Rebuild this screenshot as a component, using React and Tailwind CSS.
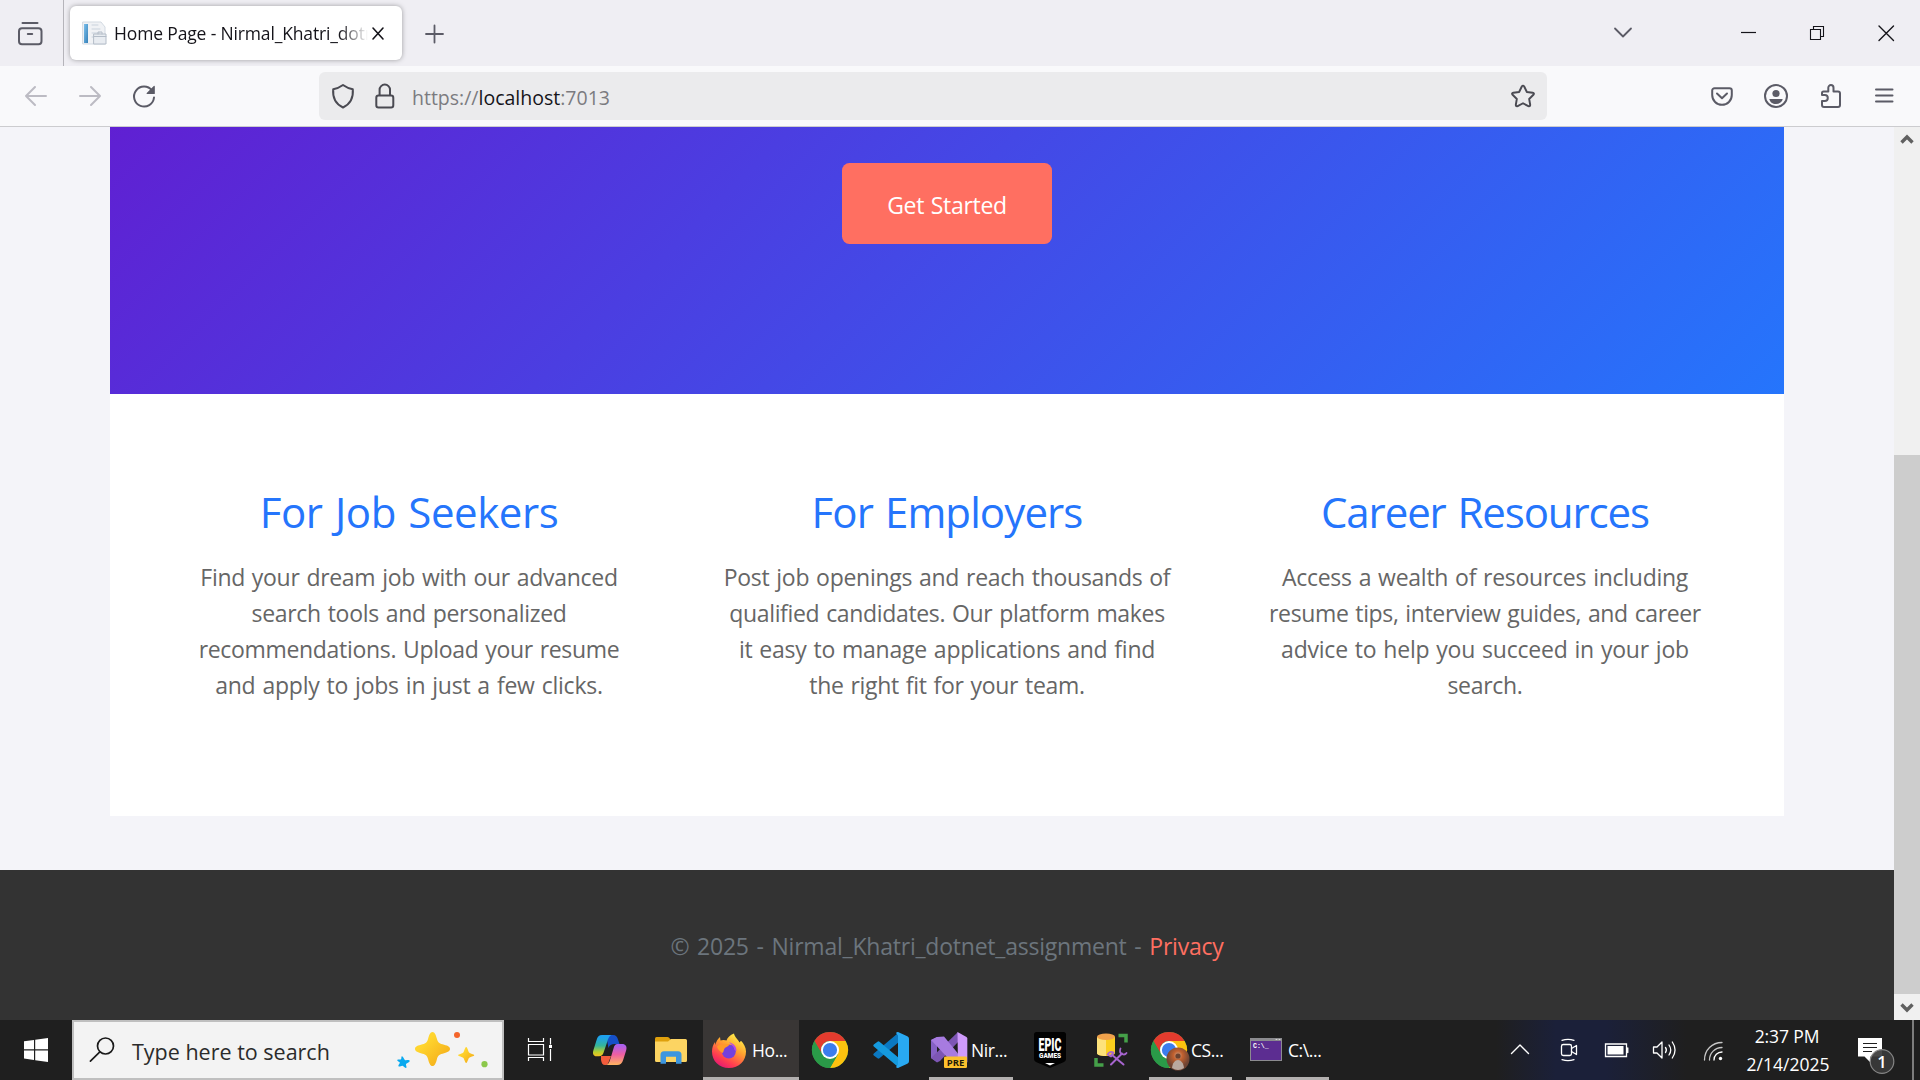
import React from "react";

// Draws an icon in a slot; x/y/w/h describe the drawing's coordinate window.
function Icon({ x, y, w, h, children, stroke = "none", sw = 2, fill = "none" }) {
  return (
    <svg
      className="block shrink-0"
      width={w}
      height={h}
      viewBox={`${x} ${y} ${w} ${h}`}
      fill={fill}
      stroke={stroke}
      strokeWidth={sw}
      strokeLinecap="round"
      strokeLinejoin="round"
    >
      {children}
    </svg>
  );
}

function TabStrip() {
  return (
    <div className="flex h-[66px] shrink-0 bg-[#efeef3]">
      <div className="w-16 border-r border-[#b5b4ba]">
        <Icon x={0} y={0} w={63} h={66} stroke="#5b5b66">
          <path d="M22.500 23h15" />
          <rect x="19" y="28.2" width="22.5" height="16" rx="3" />
          <path d="M27.8 34h4.400" />
        </Icon>
      </div>
      <div className="mt-1.5 ml-1.5 flex h-[54px] w-[332px] items-center rounded-[6px] bg-white shadow-[0_0_5px_rgba(0,0,0,0.35)]">
        <Icon x={70} y={6} w={44} h={54}>
          <defs>
            <linearGradient id="fav" x1="0" x2="1" y1="0" y2="1">
              <stop offset="0" stopColor="#7cc0ec" />
              <stop offset="1" stopColor="#3580b8" />
            </linearGradient>
          </defs>
          <path d="M83 22h18l4 5v17H83z" fill="#f0f2f5" stroke="#d3dae2" strokeWidth="1" />
          <path d="M84 24h4v19h-4z" fill="url(#fav)" />
          <path d="M92 25h6M92 29h8M92 33h8M92 37h3" stroke="#c9d2dc" strokeWidth="1" />
          <path d="M94 34h12v10H94z" fill="#e8ecf1" stroke="#b4bdc8" strokeWidth="1" />
          <path d="M94 36.5h12M98 34v-2h4v2" stroke="#b4bdc8" strokeWidth="1" />
        </Icon>
        <div className="w-[254px] overflow-hidden text-[17.5px] leading-6 tracking-[-0.15px] whitespace-nowrap text-[#15141a] [mask-image:linear-gradient(to_right,black_225px,transparent_254px)]">
          Home Page - Nirmal_Khatri_dotnet_assignment
        </div>
        <Icon x={368} y={6} w={34} h={54} stroke="#15141a" sw={1.6}>
          <path d="M373 28l10 11M383 28l-10 11" />
        </Icon>
      </div>
      <Icon x={402} y={0} w={60} h={66} stroke="#5b5b66" sw={1.8}>
        <path d="M426 34h17M434.500 25.500v17" />
      </Icon>
      <div className="ml-auto flex">
        <Icon x={1590} y={0} w={66} h={66} stroke="#5b5b66" sw={1.8}>
          <path d="M1615 28.500l8 8 8-8" />
        </Icon>
        <div className="w-[58px]" />
        <Icon x={1714} y={0} w={69} h={66} stroke="#15141a" sw={1.2}>
          <path d="M1741 32.500h15" strokeLinecap="butt" />
        </Icon>
        <Icon x={1783} y={0} w={69} h={66} stroke="#15141a" sw={1.1}>
          <path d="M1810.500 29.500h10v10h-10zM1813.500 29v-2.500h10v10h-2.500" strokeLinejoin="miter" />
        </Icon>
        <Icon x={1852} y={0} w={68} h={66} stroke="#15141a" sw={1.4}>
          <path d="M1879 26l14.500 14.500M1893.500 26l-14.500 14.500" />
        </Icon>
      </div>
    </div>
  );
}

function NavBar() {
  return (
    <div className="flex h-[61px] shrink-0 border-b border-[#cccccf] bg-[#f9f9fb] pl-[9px]">
      <Icon x={9} y={66} w={54} h={60} stroke="#bcbbc3">
        <path d="M26 96h20M35 87l-9 9 9 9" />
      </Icon>
      <Icon x={63} y={66} w={54} h={60} stroke="#bcbbc3">
        <path d="M80 96h20M91 87l9 9-9 9" />
      </Icon>
      <Icon x={117} y={66} w={54} h={60} stroke="#5b5b66">
        <path d="M152 90.500A10 10 0 1 0 154 97.500" />
        <path d="M154.200 86.500v7h-7z" fill="#5b5b66" strokeWidth="1.200" />
      </Icon>
      <div className="mt-1.5 ml-[148px] flex h-12 w-[1228px] items-center rounded-[6px] bg-[#ebebed]">
        <Icon x={319} y={72} w={48} h={48} stroke="#4a4a52">
          <path d="M343 85c3.500 2.500 6.200 3.700 9.800 4.300C353.600 98 350 104 343 107.500 336 104 332.400 98 333.200 89.300 336.800 88.700 339.500 87.500 343 85z" />
        </Icon>
        <Icon x={367} y={72} w={45} h={48} stroke="#4a4a52">
          <rect x="376.300" y="95.500" width="17" height="12" rx="2.200" />
          <path d="M379.600 95v-5.200a5.200 5.200 0 0 1 10.400 0V95" />
        </Icon>
        <div className="relative top-0.5 text-[19.5px] leading-6 whitespace-nowrap text-[#7b7b80]">
          https://<span className="text-[#15141a]">localhost</span>:7013
        </div>
        <div className="ml-auto">
          <Icon x={1499} y={72} w={48} h={48} stroke="#4a4a52">
            <path
              transform="translate(1523 96) scale(0.92) translate(-1523 -96.500)"
              strokeWidth="2.100"
              d="M1521.700 86.200q1.300-2 2.600 0l2.900 5.900 6.300.9q2.300.5.800 2.200l-4.600 4.500 1.100 6.300q.1 2.200-2 1.500l-5.800-3.100-5.800 3.100q-2.100.7-2-1.500l1.100-6.300-4.600-4.500q-1.500-1.700.8-2.200l6.300-.9z"
            />
          </Icon>
        </div>
      </div>
      <div className="ml-auto flex">
        <Icon x={1695} y={66} w={54} h={60} stroke="#5b5b66">
          <path d="M1714.500 88.200h15a2.300 2.300 0 0 1 2.300 2.300V95a9.800 9.800 0 0 1-19.600 0v-4.500a2.300 2.300 0 0 1 2.300-2.300zM1717 93.500l5 4.700 5-4.700" />
        </Icon>
        <Icon x={1749} y={66} w={54} h={60} stroke="#5b5b66">
          <circle cx="1776" cy="96" r="11" />
          <circle cx="1776" cy="93.500" r="3.600" fill="#5b5b66" stroke="none" />
          <path d="M1769.300 99h13.400c-.6 3-3.200 5-6.700 5s-6.100-2-6.700-5z" fill="#5b5b66" stroke="none" />
        </Icon>
        <Icon x={1803} y={66} w={54} h={60} stroke="#5b5b66">
          <path d="M1823.500 91.500h4.800v-3.800a2.600 2.600 0 0 1 5.200 0v3.800h4.500a2 2 0 0 1 2 2v11.500a2 2 0 0 1-2 2h-14a2 2 0 0 1-2-2v-4h2.800a3 3 0 0 0 0-6H1822v-2a1.500 1.500 0 0 1 1.500-1.500z" />
        </Icon>
        <Icon x={1857} y={66} w={63} h={60} stroke="#5b5b66">
          <path d="M1876 89.500h16.500M1876 95.500h16.500M1876 101.500h16.500" />
        </Icon>
      </div>
    </div>
  );
}

const features = [
  {
    title: "For Job Seekers",
    titleClass: "tracking-[-0.45px]",
    lines: [
      ["Find your dream job with our advanced", "tracking-[-0.3px]"],
      ["search tools and personalized", "tracking-[-0.3px]"],
      ["recommendations. Upload your resume", "tracking-[-0.32px]"],
      ["and apply to jobs in just a few clicks.", "tracking-[-0.22px]"],
    ],
  },
  {
    title: "For Employers",
    titleClass: "tracking-[-0.9px]",
    lines: [
      ["Post job openings and reach thousands of", "tracking-[-0.28px]"],
      ["qualified candidates. Our platform makes", "tracking-[-0.34px]"],
      ["it easy to manage applications and find", "tracking-[-0.24px]"],
      ["the right fit for your team.", "tracking-[-0.3px]"],
    ],
  },
  {
    title: "Career Resources",
    titleClass: "tracking-[-1.1px]",
    lines: [
      ["Access a wealth of resources including", "tracking-[-0.26px]"],
      ["resume tips, interview guides, and career", "tracking-[-0.36px]"],
      ["advice to help you succeed in your job", "tracking-[-0.22px]"],
      ["search.", "tracking-[-0.3px]"],
    ],
  },
];

function Page() {
  return (
    <div className="flex h-[893px] shrink-0 bg-[#f4f4f9]">
      <div className="flex w-[1894px] flex-col">
        <main className="mx-auto w-[1674px]">
          <section className="flex h-[267px] items-start justify-center bg-[linear-gradient(135deg,#6a11cb,#2575fc)] bg-[length:100%_610px] bg-bottom pt-9">
            <button className="h-[81px] w-[210px] rounded-[7.5px] bg-[#ff6f61] pt-[3px] text-[23px] leading-9 tracking-[-0.3px] text-white [word-spacing:1px]">
              Get Started
            </button>
          </section>
          <section className="flex h-[422px] justify-center bg-white pt-[92px]">
            {features.map((f) => (
              <article key={f.title} className="w-[538px] text-center">
                <h2 className={`text-[42px] leading-[52px] text-[#2575fc] [word-spacing:2px] ${f.titleClass}`}>
                  {f.title}
                </h2>
                <p className="mt-[21px] text-[23px] leading-9 text-[#666666] [word-spacing:1.2px]">
                  {f.lines.map(([line, spacing]) => (
                    <span key={line} className={`block whitespace-nowrap ${spacing}`}>
                      {line}
                    </span>
                  ))}
                </p>
              </article>
            ))}
          </section>
        </main>
        <footer className="mt-auto h-[150px] bg-[#333333] pt-[58px] text-center text-[23px] leading-9 tracking-[-0.22px] text-[#6c757d] [word-spacing:2px]">
          © 2025 - Nirmal_Khatri_dotnet_assignment - <a className="text-[#ff6f61]">Privacy</a>
        </footer>
      </div>
      <div className="flex w-[26px] flex-col bg-[#f0f0f0]">
        <Icon x={1894} y={127} w={26} h={26} stroke="#606060" sw={3.4}>
          <path d="M1901.500 142.500l5.500-5.500 5.500 5.500" strokeLinecap="butt" strokeLinejoin="miter" />
        </Icon>
        <div className="mt-auto h-[539px] bg-[#cdcdcd]" />
        <Icon x={1894} y={994} w={26} h={26} stroke="#606060" sw={3.4}>
          <path d="M1901.500 1004.500l5.500 5.500 5.500-5.500" strokeLinecap="butt" strokeLinejoin="miter" />
        </Icon>
      </div>
    </div>
  );
}

function Label({ children }) {
  return (
    <span className="relative top-[1.5px] text-[17.5px] leading-6 tracking-[-0.4px] whitespace-nowrap text-white">
      {children}
    </span>
  );
}

function ChromeMark({ cx, cy, r }) {
  // Three swirl sectors around a white-ringed blue centre.
  return (
    <g transform={`translate(${cx} ${cy}) scale(${r / 18})`}>
      <circle r="18" fill="#34a047" />
      <path d="M0-9H15.600A18 18 0 0 1 0 18L7.800 4.500z" fill="#fdc20f" />
      <path d="M-15.600-9A18 18 0 0 1 15.600-9H0A9 9 0 0 0-7.800 4.500z" fill="#e33b2e" />
      <path d="M-15.600-9L-7.800 4.500A9 9 0 0 0 7.800 4.500L0 18A18 18 0 0 1-15.600-9z" fill="#2a9a48" />
      <circle r="9" fill="#fff" />
      <circle r="7.100" fill="#3b7ded" />
    </g>
  );
}

function Taskbar() {
  return (
    <div className="flex h-[60px] shrink-0 bg-[#1f1f1f]">
      <Icon x={0} y={1020} w={72} h={60}>
        <path
          fill="#fff"
          d="M24 1041.300l10-1.300v9.300H24zM35.200 1039.800L48 1038v11.300H35.200zM24 1050.600h10v9.400l-10-1.400zM35.200 1050.600H48v11.400l-12.800-1.800z"
        />
      </Icon>
      <div className="flex h-[60px] w-[432px] items-center border-2 border-[#bfbfbf] bg-[#f3f3f3]">
        <Icon x={74} y={1022} w={58} h={56} stroke="#1a1a1a" sw={1.7}>
          <circle cx="105.500" cy="1046" r="8" />
          <path d="M99.600 1052.200l-9.200 9" />
        </Icon>
        <div className="relative top-0.5 text-[21.5px] leading-6 whitespace-nowrap text-[#2b2b2b]">
          Type here to search
        </div>
        <div className="ml-auto">
          <Icon x={390} y={1022} w={112} h={56}>
            <defs>
              <linearGradient id="star" x1="0" x2="1" y1="0" y2="1">
                <stop offset="0.3" stopColor="#ffd52e" />
                <stop offset="1" stopColor="#f2a516" />
              </linearGradient>
            </defs>
            <path
              fill="url(#star)"
              d="M432.500 1032c2.300 0 3.400 3 4.400 6.800 1 3.500 2 4.600 5.600 5.500 4.500 1.200 7.500 2.200 7.500 4.700s-3 3.500-7.500 4.700c-3.600.9-4.600 2-5.600 5.500-1 3.800-2.100 6.800-4.400 6.800s-3.400-3-4.400-6.800c-1-3.500-2-4.600-5.600-5.500-4.500-1.200-7.500-2.200-7.500-4.700s3-3.500 7.500-4.700c3.600-.9 4.600-2 5.600-5.500 1-3.800 2.100-6.800 4.400-6.800z"
            />
            <path
              fill="url(#star)"
              d="M466.200 1047c1 0 1.800 3.600 2.700 5.300s5.300 1.700 5.300 2.900-4.400 1.400-5.300 2.900-1.700 5-2.700 5-1.800-3.500-2.700-5-5.300-1.700-5.300-2.900 4.400-1.200 5.300-2.900 1.700-5.300 2.700-5.300z"
            />
            <path
              fill="#0aa9ef"
              d="M402 1056.200c1.200 0 1.800 3 2.900 3.800s4.500-.8 4.800.7-3 2.200-3.600 3.400 1.300 3.300 0 3.800-2.300-1.900-3.600-2.100-3.300 1.600-4 .4 1.400-2.300 1.300-3.400-3-1.500-2.500-2.700 3-.2 3.700-.9 0-3 1-3z"
            />
            <circle cx="457" cy="1035" r="3" fill="#f4652b" />
            <circle cx="484.500" cy="1064.200" r="3.100" fill="#8cc84b" />
          </Icon>
        </div>
      </div>
      <Icon x={504} y={1020} w={72} h={60} stroke="#fff" sw={1.2}>
        <path
          strokeLinecap="butt"
          strokeLinejoin="miter"
          d="M528.500 1038v3.500h15V1038M528.500 1044.500h15v10.500h-15zM528.500 1061v-3.500h15v3.500M550.500 1038v6.500M550.500 1049v12"
        />
        <path d="M549 1045h3v3h-3z" fill="#fff" stroke="none" />
      </Icon>
      <Icon x={576} y={1020} w={68} h={60}>
        <defs>
          <linearGradient id="cpa" x1="0" x2="0" y1="0" y2="1">
            <stop offset="0.1" stopColor="#1ea1ee" />
            <stop offset="0.5" stopColor="#34b59c" />
            <stop offset="0.8" stopColor="#b8cf2e" />
            <stop offset="1" stopColor="#f4c021" />
          </linearGradient>
          <linearGradient id="cpb" x1="0" x2="0" y1="0" y2="1">
            <stop offset="0.05" stopColor="#a960f0" />
            <stop offset="0.5" stopColor="#ee5fa2" />
            <stop offset="1" stopColor="#ffb45f" />
          </linearGradient>
        </defs>
        <path d="M606 1035h7c3 0 4 1.500 5 4.500l1.500 4.500h-5c-3 0-5 1-6 4z" fill="#1650c8" />
        <path d="M601 1056h10l-2.500 6.500c-.8 2-1.800 2.500-3.500 2.500-2.500 0-3.500-2-4-5z" fill="#f25c3c" />
        <path
          d="M602 1035h9.500c-2.500 1-3.400 3.500-4.500 7.500l-3.400 10c-.9 2.600-2.100 3.700-4.600 3.700h-2.500c-3 0-4.200-2.400-3.100-6l3.100-10c1.100-3.600 2.500-5.200 5.500-5.200z"
          fill="url(#cpa)"
        />
        <path
          d="M617.500 1044h4.500c3.600 0 5.300 2.400 4.200 6.200l-2.900 9.300c-1.100 3.800-3 5.500-6.300 5.500h-11c2.500-.6 3.400-2.500 4.500-6.500l3-10c.8-3 1.700-4.500 4-4.500z"
          fill="url(#cpb)"
        />
      </Icon>
      <Icon x={644} y={1020} w={54} h={60}>
        <path d="M655 1038.500q0-1.500 1.500-1.500h11q1 0 1.600.7l1.900 2.300v3H655z" fill="#dfa00d" />
        <path d="M655 1041.500h13l3-2.500h14.500q1.500 0 1.500 1.500v20q0 1.500-1.500 1.500h-29q-1.500 0-1.500-1.500z" fill="#fcd462" />
        <path d="M660.500 1063.700v-9q0-3.500 3.500-3.500h14q3.500 0 3.500 3.500v9H676v-7h-10v7z" fill="#3d96df" />
      </Icon>
      <div className="ml-[5px] flex h-[60px] w-24 items-center border-b-3 border-[#b3b0af] bg-[#393635]">
        <Icon x={703} y={1020} w={49} h={54}>
          <defs>
            <linearGradient id="ffx" x1="0.8" x2="0.2" y1="0" y2="1">
              <stop offset="0.05" stopColor="#fff04a" />
              <stop offset="0.4" stopColor="#ffa02f" />
              <stop offset="0.75" stopColor="#ff3d50" />
              <stop offset="1" stopColor="#e0127a" />
            </linearGradient>
          </defs>
          <g transform="translate(0 -1.500)">
            <path
              d="M734 1033c.8 4 4 5.500 5.500 9l1.500-1.800c2.800 3 5 6.500 5 10.800 0 9.500-7 16.500-17 16.500s-17-7-17-16.500c0-3.800 1.200-7 3-9.500l.5 3c.5-3.500 2.500-6.500 4.500-8l.5 3.500c2-.8 4.500-.6 6 0 1-3 3.500-5.500 7.500-7z"
              fill="url(#ffx)"
            />
            <circle cx="728.800" cy="1051" r="7" fill="#7440de" />
            <path d="M717 1046c2-2.500 5-2.500 7-1.500 1.500-1 3.500-1.300 5.500-.5-1 2-4 2.500-5 4s-.5 3-2 4.500c-2.500-1.500-5-3.500-5.500-6.500z" fill="#ff9a27" />
            <path d="M729 1042c4.500.5 7.500 4 7.500 8.500l-2-1c-.5-3-2.500-5.500-5.500-7.500z" fill="#b548e8" />
          </g>
        </Icon>
        <Label>Ho...</Label>
      </div>
      <Icon x={799} y={1020} w={62} h={60}>
        <ChromeMark cx={830} cy={1050} r={18} />
      </Icon>
      <Icon x={861} y={1020} w={60} h={60}>
        <path d="M899 1032.300l-1 10.400-18.500 15.500q-1 .8-2 .1l-3.700-2.800q-1.200-1 0-2z" fill="#0b78c1" />
        <path d="M899 1067.700l-1-10.400-18.500-15.500q-1-.8-2-.1l-3.700 2.800q-1.200 1 0 2z" fill="#159ade" />
        <path d="M898.500 1032.200l8.800 4q1.700.8 1.700 2.500v22.600q0 1.700-1.700 2.500l-8.800 4q-1.500.5-2.500-.8l2-2.500v-29l-2-2.500q1-1.300 2.500-.8z" fill="#29a9f2" />
      </Icon>
      <div className="ml-2 flex h-[60px] w-[84px] items-center border-b-3 border-[#b3b0af]">
        <Icon x={929} y={1020} w={42} h={57}>
          <path d="M931 1040l6-3v25l-6-4z" fill="#8661c5" />
          <path d="M931 1058l27-26v10l-18 19-3 1.500z" fill="#7d56b4" />
          <path d="M931 1040l6-3 7-.5 14 17v13l-5.500-3.500z" fill="#a77be0" />
          <path d="M957.500 1032l9 5q.8.500.8 1.500v23q0 1-.8 1.500l-8.500 4.500z" fill="#cf9bfb" />
          <rect x="944" y="1056.500" width="23" height="11.500" rx="1.200" fill="#fcc12d" />
          <text x="955.600" y="1065.800" textAnchor="middle" fontFamily="Open Sans, sans-serif" fontSize="9.500" fontWeight="700" fill="#1f1a08">
            PRE
          </text>
        </Icon>
        <Label>Nir...</Label>
      </div>
      <Icon x={1013} y={1020} w={74} h={60}>
        <path d="M1036.500 1032h27q2.500 0 2.500 2.500v24.500q0 2-2 3l-14 6-14-6q-2-1-2-3v-24.500q0-2.500 2.500-2.500z" fill="#020202" />
        <text x="1050" y="1050.800" textAnchor="middle" textLength="23" lengthAdjust="spacingAndGlyphs" fontFamily="Roboto, sans-serif" fontSize="19" fontWeight="900" fill="#fff">
          EPIC
        </text>
        <text x="1050" y="1058" textAnchor="middle" textLength="22" lengthAdjust="spacingAndGlyphs" fontFamily="Roboto, sans-serif" fontSize="6.500" fontWeight="900" fill="#fff">
          GAMES
        </text>
        <path d="M1045 1063h10l-5 2.500z" fill="#fff" />
      </Icon>
      <Icon x={1087} y={1020} w={48} h={60}>
        <path d="M1097 1037v16c0 4 18 4 18 0v-16z" fill="#fbcf1e" />
        <path d="M1097 1037v16c0 2 3 3 9 3v-17z" fill="#fde27a" />
        <ellipse cx="1106" cy="1036.700" rx="9" ry="3.200" fill="#efa14b" />
        <path d="M1118.500 1035.500h7.500v7M1096 1058v7h7.500" stroke="#45a049" strokeWidth="3.500" strokeLinecap="butt" strokeLinejoin="miter" />
        <path d="M1111 1064.500l11-11M1111.500 1054.500l12 10" stroke="#a765cf" strokeWidth="2" />
        <path d="M1107.500 1054.500c1.500-2.500 4-3 6-2l-2.500 4zM1120.500 1048.500c-1 2.500-.5 4.500 1.500 5.500s3.500.5 4.500-1" stroke="#a765cf" strokeWidth="1.800" />
      </Icon>
      <div className="ml-[14px] flex h-[60px] w-[83px] items-center border-b-3 border-[#b3b0af]">
        <Icon x={1149} y={1020} w={42} h={57}>
          <defs>
            <radialGradient id="ava" cx="0.5" cy="0.35">
              <stop offset="0" stopColor="#c9a48c" />
              <stop offset="0.4" stopColor="#c2612f" />
              <stop offset="1" stopColor="#6f4433" />
            </radialGradient>
          </defs>
          <ChromeMark cx={1169} cy={1050} r={18} />
          <circle cx="1178" cy="1059" r="11.500" fill="url(#ava)" />
          <circle cx="1178" cy="1056" r="2.600" fill="#6b4230" />
          <path d="M1172 1068c.5-5 3-8 6-8s5.500 3 6 8q-6 4-12 0z" fill="#b9a9a0" />
        </Icon>
        <Label>CS...</Label>
      </div>
      <div className="ml-[14px] flex h-[60px] w-[83px] items-center border-b-3 border-[#b3b0af]">
        <Icon x={1246} y={1020} w={42} h={57}>
          <path d="M1250 1038h32v23h-32z" fill="#8b8b8f" />
          <path d="M1251 1041h30v19h-30z" fill="#5c2d91" />
          <path d="M1276 1039.500h1M1279 1039.500h1" stroke="#d8d8d8" strokeWidth="1" />
          <text x="1253" y="1047.500" fontFamily="Liberation Mono, monospace" fontSize="6.500" fontWeight="700" fill="#fff">
            C:\_
          </text>
        </Icon>
        <Label>C:\...</Label>
      </div>
      <div className="ml-auto flex bg-[linear-gradient(to_right,#1f1f1f_0px,#1b2039_60px,#1b2039_110px,#1f1f1f_190px)]">
        <Icon x={1496} y={1020} w={48} h={60} stroke="#fff" sw={1.4}>
          <path d="M1511.500 1053.500l8.500-8.500 8.500 8.500" />
        </Icon>
        <Icon x={1544} y={1020} w={49} h={60} stroke="#fff" sw={1.3}>
          <rect x="1561.500" y="1044.500" width="10" height="11" rx="1.800" />
          <path d="M1571.500 1048.500l5-3v9l-5-3M1562 1040.300q6-2 12 0M1562 1059.700q6 2 12 0" />
        </Icon>
        <Icon x={1593} y={1020} w={48} h={60} stroke="#fff" sw={1.3}>
          <path d="M1605.500 1044h21v12.500h-21zM1627.800 1048v4.500" strokeLinejoin="miter" />
          <path d="M1607.500 1046h16v8.500h-16z" fill="#fff" stroke="none" />
        </Icon>
        <Icon x={1641} y={1020} w={48} h={60} stroke="#fff" sw={1.3}>
          <path d="M1653.500 1047h3.500l5-5v16l-5-5h-3.500zM1665.500 1047.500q1.800 2.500 0 5M1669 1045q3.500 5 0 10M1672.300 1042q5.500 8 0 16" />
        </Icon>
        <Icon x={1689} y={1020} w={48} h={60} stroke="#fff" sw={1.3}>
          <path d="M1704.500 1060c0-10 7.500-17.500 17.500-17.500M1709.500 1060c0-7 5.500-12.500 12.500-12.500" opacity="0.75" />
          <path d="M1714 1060c0-4.500 3.500-8 8-8" />
          <circle cx="1720.500" cy="1058.500" r="1.700" fill="#fff" stroke="none" />
        </Icon>
        <div className="flex w-[100px] flex-col pt-0.5 text-center text-[17.5px] leading-7 whitespace-nowrap text-white">
          <span className="tracking-[-0.1px]">2:37 PM</span>
          <span className="relative left-px">2/14/2025</span>
        </div>
        <Icon x={1837} y={1020} w={75} h={60}>
          <path d="M1858 1038h24v18.500h-11.500v6l-6-6H1858z" fill="#fff" />
          <path d="M1863 1043.500h14M1863 1047.500h14M1863 1051.500h9" stroke="#1f1f1f" strokeWidth="1.200" strokeLinecap="butt" />
          <circle cx="1882" cy="1061.500" r="11.800" fill="#3a3a3a" fillOpacity="0.920" stroke="#868686" strokeWidth="1.200" />
          <text x="1882" y="1067.500" textAnchor="middle" fontFamily="Open Sans, sans-serif" fontSize="16.500" fontWeight="600" fill="#fff">
            1
          </text>
        </Icon>
        <div className="mr-1.5 w-0.5 bg-[#7d7d7d]" />
      </div>
    </div>
  );
}

export default function App() {
  return (
    <div className="flex h-[1080px] w-[1920px] flex-col overflow-hidden font-['Open_Sans','Noto_Sans',sans-serif]">
      <TabStrip />
      <NavBar />
      <Page />
      <Taskbar />
    </div>
  );
}
